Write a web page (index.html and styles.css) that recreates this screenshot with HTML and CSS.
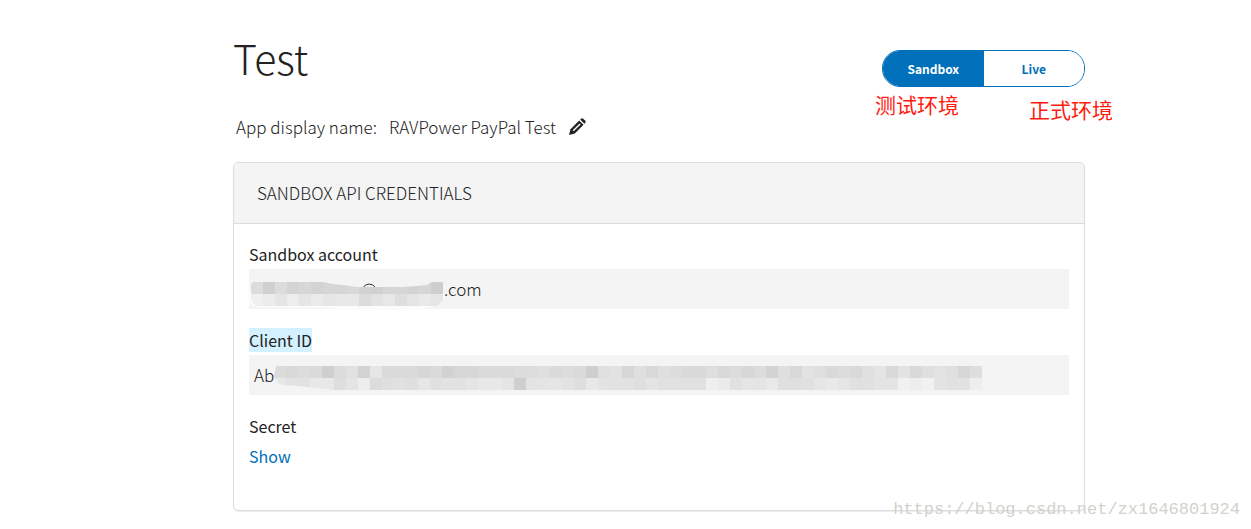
FILE: index.html
```html
<!DOCTYPE html>
<html lang="en">
<head>
    <meta charset="UTF-8">
    <meta name="viewport" content="width=device-width, initial-scale=1.0">
    <title>Test</title>
    <link rel="stylesheet" href="styles.css">
</head>
<body>
    <main class="page">
        <header class="app-header">
            <h1>Test</h1>
            <div class="env-toggle">
                <button type="button" class="active">Sandbox</button>
                <button type="button">Live</button>
                <span class="note note-sandbox" lang="zh-CN">测试环境</span>
                <span class="note note-live" lang="zh-CN">正式环境</span>
            </div>
        </header>

        <div class="display-name">
            <span>App display name:</span>
            <span>RAVPower PayPal Test</span>
            <button type="button" class="edit" aria-label="Edit display name">
                <svg width="18" height="18" viewBox="0 0 18 18">
                    <path d="M1 17l1.5-5.8L11.2 2.5l4.3 4.3-8.7 8.7z" fill="#222"/>
                    <path d="M12.2 1.6l.8-.8q1.2-.9 2.4.1l1.7 1.7q1 1.2 0 2.4l-.7.7z" fill="#222"/>
                    <path d="M5.2 12.8l6.9-6.9" stroke="#fff" stroke-width="1.4"/>
                </svg>
            </button>
        </div>

        <section class="card">
            <h2>SANDBOX API CREDENTIALS</h2>
            <div class="card-body">
                <h3>Sandbox account</h3>
                <div class="field">
                    <svg class="mask mask-account" width="193" height="40" viewBox="0 0 193 40">
                        <defs>
                            <clipPath id="account-shape">
                                <path d="M2 13H72L82 15L92 16L106 18H150L166 17L176 16Q179 13 182 13H190Q194 13 194 17V25Q193 33 185 37H6Q1 35 0 30V15Z"/>
                            </clipPath>
                        </defs>
                        <path d="M-3 25Q-2 37 6 38L80 39Q100 42 150 41Q188 42 194 28L190 20H0Z" fill="#fbfbfb"/>
                        <path d="M112 19Q114 15 118 15Q122 15 125 19" fill="none" stroke="#333"/>
                        <g id="account-cells" clip-path="url(#account-shape)"></g>
                    </svg>
                    <span>.com</span>
                </div>

                <h3><mark>Client ID</mark></h3>
                <div class="field">
                    <span>Ab</span>
                    <svg class="mask mask-client" width="708" height="40" viewBox="0 0 708 40">
                        <defs>
                            <clipPath id="client-shape">
                                <path d="M2 11H708V35H60L42 33L24 31L8 30Q2 28 0 21Z"/>
                            </clipPath>
                        </defs>
                        <g id="client-cells" clip-path="url(#client-shape)"></g>
                    </svg>
                </div>

                <h3>Secret</h3>
                <a class="show" href="#">Show</a>
            </div>
        </section>
    </main>
    <div class="watermark">https://blog.csdn.net/zx1646801924</div>

    <script src="mask.js"></script>
</body>
</html>
```
FILE: styles.css
```css
* {
    box-sizing: border-box;
}

body {
    margin: 0;
    position: relative;
    background-color: #fff;
    color: #222;
    font-family: "Noto Sans CJK SC", "Open Sans", sans-serif;
    font-size: 17px;
    font-weight: 300;
    line-height: 24px;
}

h1, h2, h3 {
    margin: 0;
}

button {
    font-family: inherit;
    cursor: pointer;
}

.page {
    padding: 32px 166px 18px 233px;
}

.app-header {
    display: flex;
    justify-content: space-between;
    align-items: center;
    height: 72px;
}

.app-header h1 {
    font-size: 41px;
    font-weight: 300;
    line-height: 56px;
    padding-bottom: 22px;
}

.env-toggle {
    position: relative;
    display: flex;
    width: 203px;
    height: 37px;
    border: 1px solid #0070ba;
    border-radius: 18px;
}

.env-toggle button {
    flex: 1;
    padding: 0;
    border: 0;
    border-radius: 0 17px 17px 0;
    background: #fff;
    color: #0070ba;
    font-size: 12px;
    font-weight: 700;
}

.env-toggle .active {
    border-radius: 17px 0 0 17px;
    background: #0070ba;
    color: #fff;
}

/* Red notes hanging under the toggle */
.note {
    position: absolute;
    color: #ff1a0f;
    font-size: 21px;
    font-weight: 400;
    white-space: nowrap;
}

.note-sandbox {
    top: 41px;
    left: -8px;
}

.note-live {
    top: 46px;
    right: -29px;
}

.display-name {
    display: flex;
    align-items: center;
    gap: 12px;
    padding: 11px 3px 23px;
}

.edit {
    display: flex;
    padding: 0;
    border: 0;
    background: none;
}

.card {
    border: 1px solid #dcdcdc;
    border-radius: 5px;
    box-shadow: 0 1px 1px #eee;
}

.card h2 {
    padding: 18px 23px;
    border-bottom: 1px solid #dcdcdc;
    border-radius: 4px 4px 0 0;
    background-color: #f4f4f4;
    font-size: 17px;
    font-weight: 300;
}

.card-body {
    padding: 18px 15px 42px;
}

.card h3 {
    padding-bottom: 3px;
    font-size: 16px;
    font-weight: 400;
}

.card mark {
    background-color: #d4f1ff;
    color: inherit;
}

.field {
    display: flex;
    align-items: center;
    height: 40px;
    margin-bottom: 19px;
    padding-left: 5px;
    background-color: #f4f4f4;
}

.mask {
    flex: none;
    overflow: visible;
}

.mask-account {
    margin-left: -3px;
}

.show {
    display: inline-block;
    margin-top: 3px;
    color: #0070ba;
    font-size: 16px;
    font-weight: 400;
    text-decoration: none;
}

.watermark {
    position: absolute;
    right: 11px;
    bottom: 7px;
    color: #d2d2cc;
    font-family: "Liberation Mono", monospace;
    font-size: 17px;
}
```
FILE: mask.js
```js
// Grey levels of the mosaic cells, two rows per mask
const accountRows = [
    'dc d0 dc d3 d7 d3 d6 d5 d8 d2 d0 d6 d6 d3 d6 ce',
    'ef ec e5 ed e5 eb e6 e8 e8 dc e3 e7 de e4 e9 e6'
];
const clientRows = [
    'db d8 dc da cf dc e1 d2 e6 da da da d6 da d2 d7 d7 da da da dc dd df da dd da cf e0 e2 d7 df d8 df dc d9 d9 de d8 dc d7 dc d3 df d8 e2 de d9 dc d9 e0 e5 d9 e3 d9 df e3 df d7 de',
    'e8 e2 e2 e8 e8 de e4 ed dc df e1 df e6 e0 e2 e2 e5 e8 e8 e5 cf e3 e4 e6 e3 de e8 e3 e2 e2 df e4 e1 e1 e1 e1 ef eb e1 e5 e4 e9 df df e1 e6 e9 e5 e0 e1 e4 e4 f0 ed f1 e3 e1 e2 ee'
];

function drawCells(id, rows, top) {
    const group = document.getElementById(id);
    rows.forEach((row, r) => {
        row.split(' ').forEach((level, c) => {
            const cell = document.createElementNS('http://www.w3.org/2000/svg', 'rect');
            cell.setAttribute('x', c * 12);
            cell.setAttribute('y', top + r * 12);
            cell.setAttribute('width', 12);
            cell.setAttribute('height', 12);
            cell.setAttribute('fill', '#' + level + level + level);
            group.appendChild(cell);
        });
    });
}

drawCells('account-cells', accountRows, 13);
drawCells('client-cells', clientRows, 11);
```
